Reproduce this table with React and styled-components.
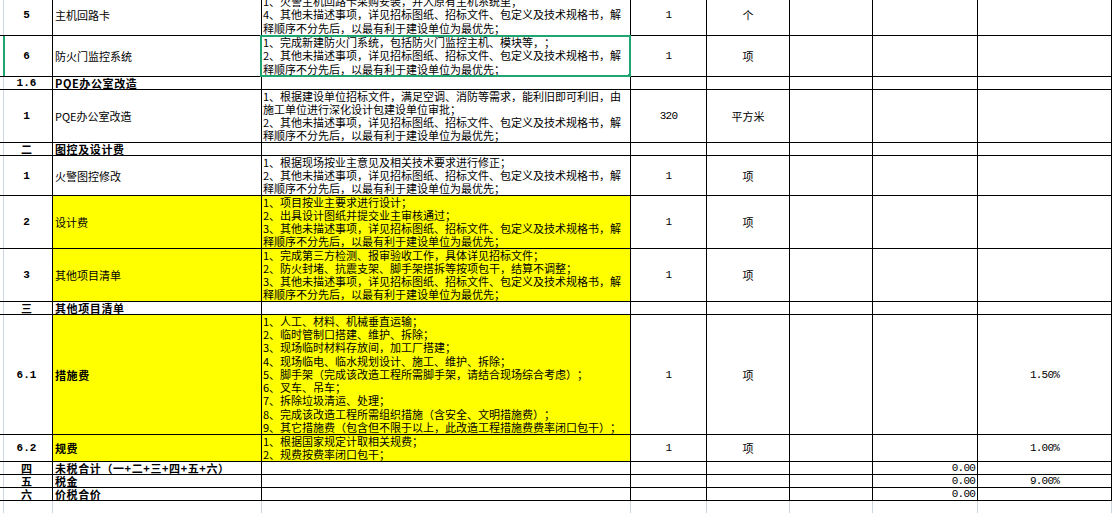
import React from 'react';
import styled, { createGlobalStyle, css } from 'styled-components';

const YELLOW = '#ffff00';
const GRID = '#000000';
const FAINT = '#cfd5df';
const SELECT = '#1fa56f';
const COLUMNS = '53px 209px 369px 76px 83px 83px 105px 134px';

const OTHER =
  '其他未描述事项，详见招标图纸、招标文件、包定义及技术规格书，解释顺序不分先后，以最有利于建设单位为最优先；';

const rows = [
  {
    height: 41,
    no: '5',
    name: '主机回路卡',
    desc: ['1、火警主机回路卡采购安装，并入原有主机系统里；', `4、${OTHER}`],
    qty: '1',
    unit: '个',
  },
  {
    height: 41,
    no: '6',
    name: '防火门监控系统',
    desc: ['1、完成新建防火门系统，包括防火门监控主机、模块等，；', `2、${OTHER}`],
    qty: '1',
    unit: '项',
    selected: true,
  },
  { height: 13, section: true, no: '1.6', name: 'PQE办公室改造' },
  {
    height: 53,
    no: '1',
    name: 'PQE办公室改造',
    desc: [
      '1、根据建设单位招标文件，满足空调、消防等需求，能利旧即可利旧，由施工单位进行深化设计包建设单位审批；',
      `2、${OTHER}`,
    ],
    qty: '320',
    unit: '平方米',
  },
  { height: 13, section: true, no: '二', name: '图控及设计费' },
  {
    height: 40,
    no: '1',
    name: '火警图控修改',
    desc: ['1、根据现场按业主意见及相关技术要求进行修正；', `2、${OTHER}`],
    qty: '1',
    unit: '项',
  },
  {
    height: 53,
    no: '2',
    name: '设计费',
    fill: true,
    desc: ['1、项目按业主要求进行设计；', '2、出具设计图纸并提交业主审核通过；', `3、${OTHER}`],
    qty: '1',
    unit: '项',
  },
  {
    height: 53,
    no: '3',
    name: '其他项目清单',
    fill: true,
    desc: [
      '1、完成第三方检测、报审验收工作，具体详见招标文件；',
      '2、防火封堵、抗震支架、脚手架搭拆等按项包干，结算不调整；',
      `3、${OTHER}`,
    ],
    qty: '1',
    unit: '项',
  },
  { height: 13, section: true, no: '三', name: '其他项目清单' },
  {
    height: 120,
    no: '6.1',
    name: '措施费',
    strong: true,
    fill: true,
    desc: [
      '1、人工、材料、机械垂直运输；',
      '2、临时管制口搭建、维护、拆除；',
      '3、现场临时材料存放间，加工厂搭建；',
      '4、现场临电、临水规划设计、施工、维护、拆除；',
      '5、脚手架（完成该改造工程所需脚手架，请结合现场综合考虑）；',
      '6、叉车、吊车；',
      '7、拆除垃圾清运、处理；',
      '8、完成该改造工程所需组织措施（含安全、文明措施费）；',
      '9、其它措施费（包含但不限于以上，此改造工程措施费费率闭口包干）；',
    ],
    qty: '1',
    unit: '项',
    rate: '1.50%',
  },
  {
    height: 27,
    no: '6.2',
    name: '规费',
    strong: true,
    fill: true,
    desc: ['1、根据国家规定计取相关规费；', '2、规费按费率闭口包干；'],
    qty: '1',
    unit: '项',
    rate: '1.00%',
  },
  { height: 13, section: true, no: '四', name: '未税合计（一+二+三+四+五+六）', total: '0.00' },
  { height: 13, section: true, no: '五', name: '税金', total: '0.00', rate: '9.00%' },
  { height: 13, section: true, no: '六', name: '价税合价', total: '0.00' },
];

const GlobalStyle = createGlobalStyle`
  body {
    margin: 0;
    background: #ffffff;
    color: #000000;
    font-family: "Noto Sans CJK SC", "Noto Sans", sans-serif;
    font-size: 11px;
    text-spacing-trim: space-all;
  }
`;

const Viewport = styled.div`
  width: 1113px;
  height: 513px;
  overflow: hidden;
`;

const Sheet = styled.div`
  display: flex;
  flex-direction: column;
  margin-top: -5px;
`;

const Row = styled.div`
  display: grid;
  grid-template-columns: ${COLUMNS};
  grid-template-rows: ${(p) => p.$height}px;
  height: ${(p) => p.$height}px;
  flex-shrink: 0;
`;

const Cell = styled.div`
  position: relative;
  box-sizing: border-box;
  min-height: 0;
  display: flex;
  align-items: ${(p) => (p.$bottom ? 'flex-end' : 'center')};
  justify-content: ${(p) => p.$justify || 'center'};
  padding: 0 2px;
  border-right: 1px solid ${GRID};
  border-bottom: 1px solid ${GRID};
  background: ${(p) => (p.$fill ? YELLOW : '#ffffff')};
  line-height: 12px;
  white-space: nowrap;
`;

const IndexCell = styled(Cell)`
  padding-left: 3px;
  font-weight: 700;
  background: linear-gradient(
    to right,
    transparent 3px,
    ${(p) => (p.$marked ? SELECT : FAINT)} 3px,
    ${(p) => (p.$marked ? SELECT : FAINT)} ${(p) => (p.$marked ? 5 : 4)}px,
    #ffffff ${(p) => (p.$marked ? 5 : 4)}px
  );
`;

const NameCell = styled(Cell)`
  padding-left: 2px;
  ${(p) =>
    p.$strong &&
    css`
      font-weight: 700;
      letter-spacing: 0.6px;
    `}
`;

const DescCell = styled(Cell)`
  padding: 0 2px 0 1px;
  white-space: normal;
`;

const DescText = styled.div`
  width: 100%;
  line-height: 13.2px;
  overflow-wrap: anywhere;
`;

const Line = styled.div`
  text-align: left;
`;

const Num = styled.span`
  font-family: "Liberation Mono", "DejaVu Sans Mono", monospace;
  letter-spacing: ${(p) => (p.$bold ? '0' : '-0.8px')};
  font-weight: ${(p) => (p.$bold ? 700 : 400)};
`;

const Selection = styled.div`
  position: absolute;
  top: -1px;
  left: -2px;
  right: -1px;
  bottom: -1px;
  border: 2px solid ${SELECT};
  pointer-events: none;
`;

const Handle = styled.div`
  position: absolute;
  right: -4px;
  bottom: -4px;
  width: 5px;
  height: 5px;
  background: ${SELECT};
`;

const BlankCell = styled.div`
  border-right: 1px solid ${FAINT};
  &:first-child {
    background: linear-gradient(to right, transparent 3px, ${FAINT} 3px, ${FAINT} 4px, transparent 4px);
  }
`;

const isAscii = (text) => /^[0-9.%]+$/.test(text);

const Value = ({ children, bold }) =>
  isAscii(children) ? <Num $bold={bold}>{children}</Num> : children;

const SheetRow = ({ row }) => (
  <Row $height={row.height}>
    <IndexCell $marked={row.selected}>
      <Value bold>{row.no}</Value>
    </IndexCell>
    <NameCell $justify="flex-start" $fill={row.fill} $strong={row.section || row.strong}>
      {row.name}
    </NameCell>
    <DescCell $fill={row.fill}>
      {row.desc && (
        <DescText>
          {row.desc.map((line) => (
            <Line key={line}>{line}</Line>
          ))}
        </DescText>
      )}
      {row.selected && (
        <Selection>
          <Handle />
        </Selection>
      )}
    </DescCell>
    <Cell>{row.qty && <Value>{row.qty}</Value>}</Cell>
    <Cell>{row.unit}</Cell>
    <Cell />
    <Cell $justify="flex-end" $bottom>
      {row.total && <Value>{row.total}</Value>}
    </Cell>
    <Cell $bottom={row.section}>{row.rate && <Value>{row.rate}</Value>}</Cell>
  </Row>
);

const App = () => (
  <Viewport>
    <GlobalStyle />
    <Sheet>
      {rows.map((row, i) => (
        <SheetRow key={i} row={row} />
      ))}
      <Row $height={20}>
        {Array.from({ length: 8 }, (_, i) => (
          <BlankCell key={i} />
        ))}
      </Row>
    </Sheet>
  </Viewport>
);

export default App;
